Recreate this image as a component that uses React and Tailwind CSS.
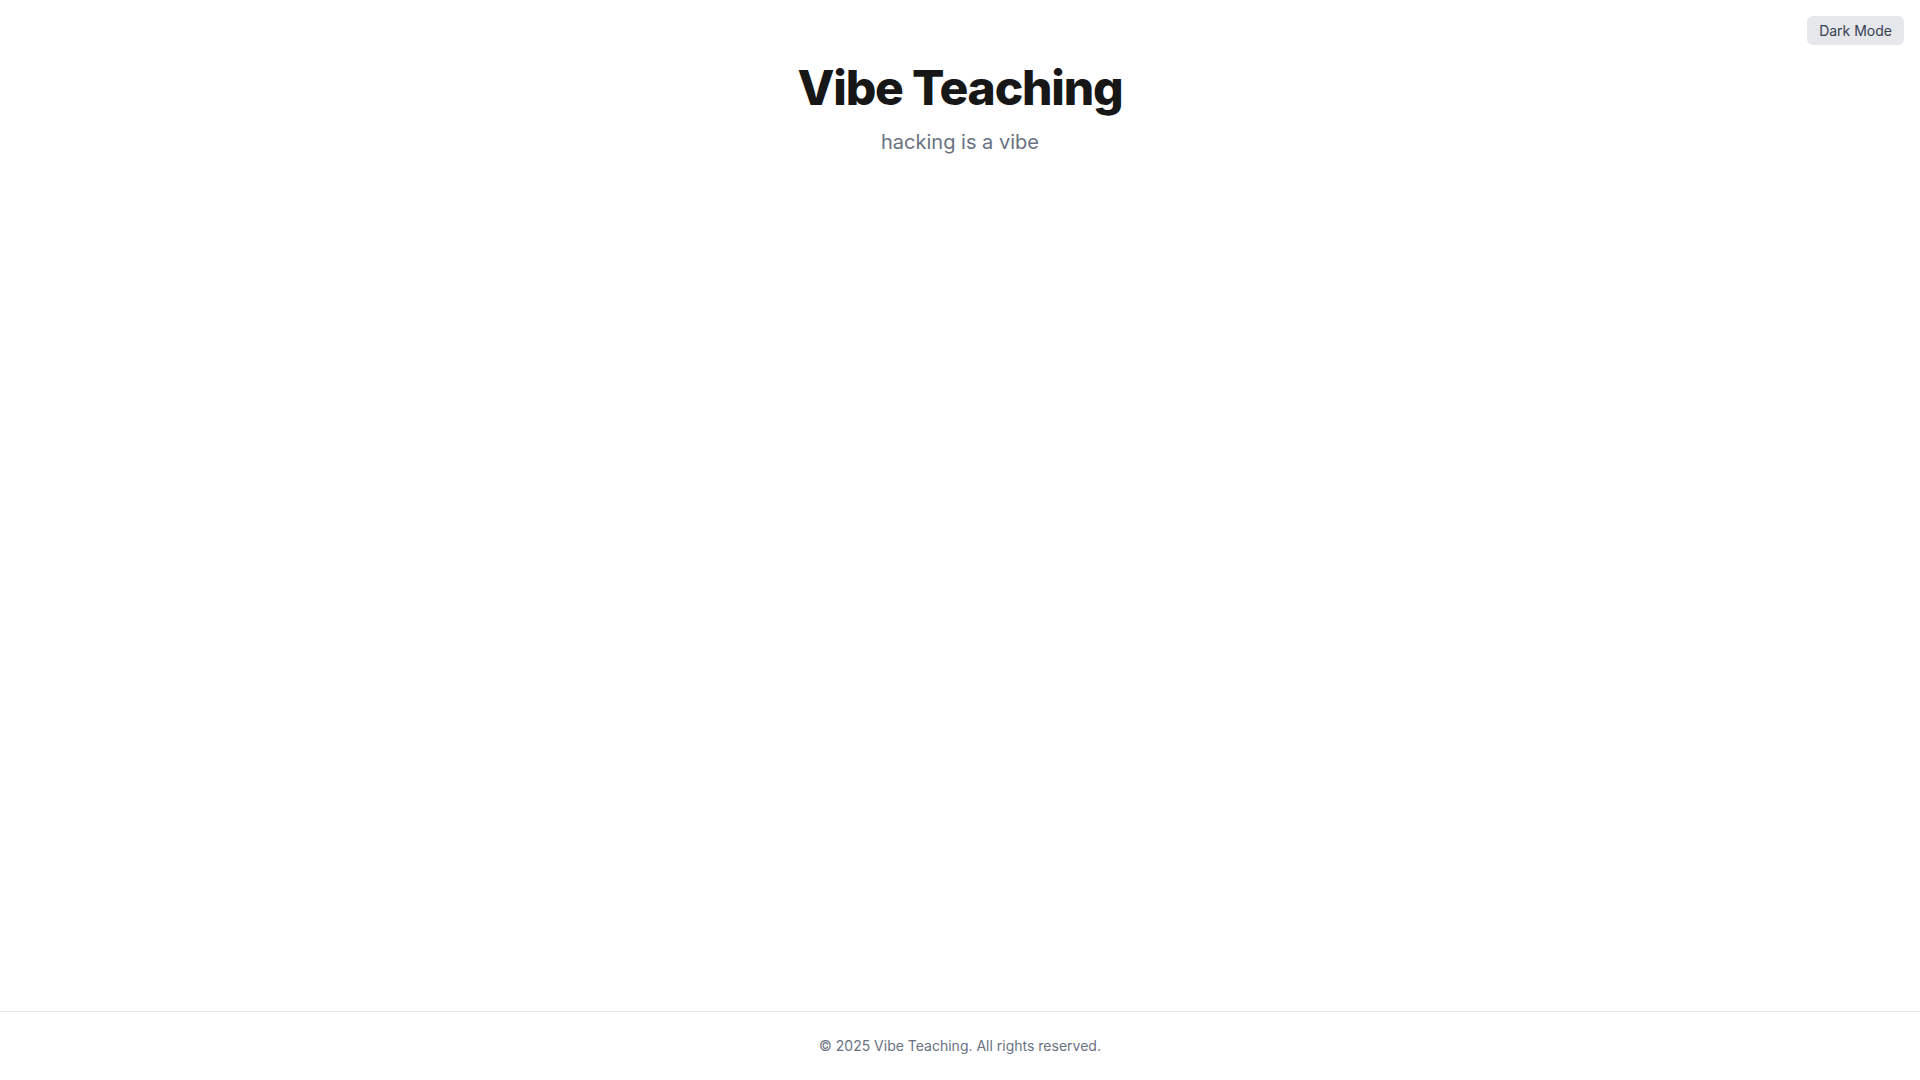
import React, { useState } from "react";

export default function App() {
    const [dark, setDark] = useState(false);

    return (
        <div className="min-h-screen flex flex-col bg-white font-['Inter',sans-serif]">
            <button
                onClick={() => setDark(!dark)}
                className="fixed top-4 right-4 px-3 py-1 rounded-md bg-gray-200 text-sm leading-[21px] text-gray-700"
            >
                {dark ? "Light Mode" : "Dark Mode"}
            </button>

            <main className="flex-1">
                <header className="pt-16 text-center">
                    <h1 className="text-5xl font-extrabold tracking-tight text-neutral-900">Vibe Teaching</h1>
                    <p className="mt-4 text-xl text-gray-500">hacking is a vibe</p>
                </header>
            </main>

            <footer className="border-t border-gray-200 py-6 text-center text-sm text-gray-500">
                © 2025 Vibe Teaching. All rights reserved.
            </footer>
        </div>
    );
}
